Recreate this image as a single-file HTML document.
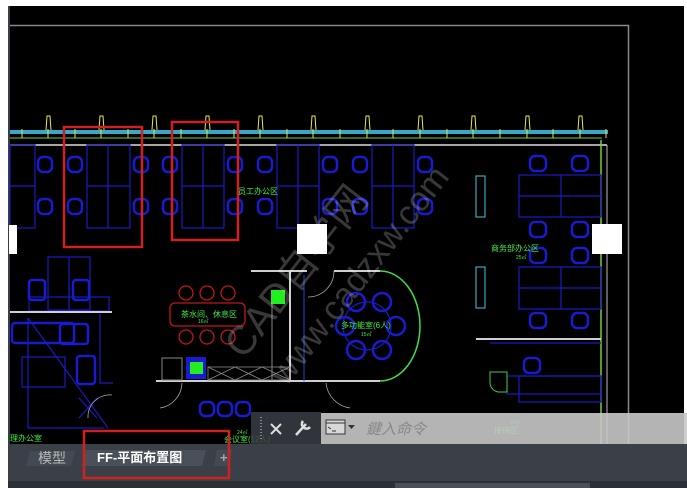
<!DOCTYPE html>
<html><head><meta charset="utf-8"><style>
body{margin:0;width:687px;height:488px;overflow:hidden;background:#fff;font-family:"Liberation Sans","Noto Sans CJK SC",sans-serif}
svg{position:absolute;left:0;top:0}
</style></head><body>
<svg width="687" height="488" viewBox="0 0 687 488" xmlns="http://www.w3.org/2000/svg">
<rect x="8" y="6" width="676" height="440" fill="#000"/>
<rect x="8" y="6" width="2" height="440" fill="#3a3f47"/>
<path d="M10 25.5H628.5V446" stroke="#8a8a8a" stroke-width="1.5" fill="none"/>
<rect x="10" y="130" width="598" height="4" fill="#3aa6c8"/>
<line x1="10" y1="138" x2="602" y2="138" stroke="#6fd040" stroke-width="1"/>
<g stroke="#e8e840" stroke-width="1" fill="none">
<path d="M46 130L47 116H50L51 130M99 130L100 116H103L104 130M152 130L153 116H156L157 130M205 130L206 116H209L210 130M258 130L259 116H262L263 130M311 130L312 116H315L316 130M365 130L366 116H369L370 130M418 130L419 116H422L423 130M471 130L472 116H475L476 130M525 130L526 116H529L530 130M578 130L579 116H582L583 130"/>
<path d="M22 129V138M48 129V138M75 129V138M101 129V138M128 129V138M154 129V138M181 129V138M207 129V138M234 129V138M260 129V138M287 129V138M313 129V138M340 129V138M367 129V138M393 129V138M420 129V138M447 129V138M473 129V138M500 129V138M527 129V138M553 129V138M580 129V138M606 129V138"/>
</g>
<line x1="10" y1="145" x2="607" y2="145" stroke="#ddd" stroke-width="1.5"/>
<line x1="601" y1="140" x2="601" y2="446" stroke="#6fd040" stroke-width="1.5"/>
<line x1="607" y1="145" x2="607" y2="446" stroke="#bbb" stroke-width="1"/>
<g stroke="#1a1ac0" stroke-width="1.2" fill="none">
<rect x="10" y="145" width="25" height="83"/><line x1="10" y1="186" x2="35" y2="186"/>
<rect x="87" y="145" width="43" height="83"/><line x1="108" y1="145" x2="108" y2="228"/><line x1="87" y1="186" x2="130" y2="186"/>
<rect x="182" y="145" width="42" height="83"/><line x1="203" y1="145" x2="203" y2="228"/><line x1="182" y1="186" x2="224" y2="186"/>
<rect x="277" y="145" width="42" height="83"/><line x1="298" y1="145" x2="298" y2="228"/><line x1="277" y1="186" x2="319" y2="186"/>
<rect x="372" y="145" width="42" height="83"/><line x1="393" y1="145" x2="393" y2="228"/><line x1="372" y1="186" x2="414" y2="186"/>
<rect x="519" y="175" width="82" height="42"/><line x1="561" y1="175" x2="561" y2="217"/><line x1="519" y1="196" x2="601" y2="196"/>
<rect x="519" y="267" width="82" height="42"/><line x1="561" y1="267" x2="561" y2="309"/><line x1="519" y1="288" x2="601" y2="288"/>
</g>
<g stroke="#1a1ad0" stroke-width="2.5" fill="none">
<rect x="38" y="157" width="14" height="15" rx="5"/><rect x="38" y="199" width="14" height="15" rx="5"/>
<rect x="68" y="157" width="14" height="15" rx="5"/><rect x="68" y="199" width="14" height="15" rx="5"/>
<rect x="134" y="157" width="14" height="15" rx="5"/><rect x="134" y="199" width="14" height="15" rx="5"/>
<rect x="163" y="157" width="14" height="15" rx="5"/><rect x="163" y="199" width="14" height="15" rx="5"/>
<rect x="228" y="157" width="14" height="15" rx="5"/><rect x="228" y="199" width="14" height="15" rx="5"/>
<rect x="258" y="157" width="14" height="15" rx="5"/><rect x="258" y="199" width="14" height="15" rx="5"/>
<rect x="323" y="157" width="14" height="15" rx="5"/><rect x="323" y="199" width="14" height="15" rx="5"/>
<rect x="353" y="157" width="14" height="15" rx="5"/><rect x="353" y="199" width="14" height="15" rx="5"/>
<rect x="418" y="157" width="14" height="15" rx="5"/><rect x="418" y="199" width="14" height="15" rx="5"/>
<rect x="530" y="156" width="16" height="15" rx="5"/><rect x="572" y="156" width="16" height="15" rx="5"/>
<rect x="530" y="222" width="16" height="15" rx="5"/><rect x="572" y="222" width="16" height="15" rx="5"/>
<rect x="530" y="248" width="16" height="15" rx="5"/><rect x="572" y="248" width="16" height="15" rx="5"/>
<rect x="530" y="313" width="16" height="15" rx="5"/><rect x="572" y="313" width="16" height="15" rx="5"/>
<rect x="524" y="358" width="16" height="15" rx="5"/>
<rect x="29" y="280" width="16" height="20" rx="3"/><rect x="73" y="280" width="16" height="20" rx="3"/>
<rect x="12" y="323" width="62" height="20" rx="3"/><rect x="60" y="324" width="28" height="20" rx="3"/>
<rect x="77" y="356" width="18" height="28" rx="3"/>
<ellipse cx="356" cy="302" rx="9" ry="9"/><ellipse cx="382" cy="302" rx="9" ry="9"/>
<ellipse cx="345" cy="326" rx="9" ry="9"/><ellipse cx="396" cy="326" rx="9" ry="9"/>
<ellipse cx="356" cy="350" rx="9" ry="9"/><ellipse cx="382" cy="350" rx="9" ry="9"/>
<rect x="200" y="402" width="14" height="14" rx="5"/><rect x="218" y="402" width="14" height="14" rx="5"/><rect x="236" y="402" width="14" height="14" rx="5"/>
</g>
<g stroke="#1a1ac0" stroke-width="1.2" fill="none">
<rect x="48" y="257" width="42" height="53"/><line x1="69" y1="257" x2="69" y2="310"/><rect x="29" y="297" width="80" height="14"/>
<rect x="22" y="357" width="43" height="30"/>
<path d="M28 318L108 428M28 318V428H104"/><path d="M79 418L97 398M79 398L97 418"/>
<circle cx="367" cy="326" r="24"/>
<rect x="519" y="376" width="82" height="26"/><rect x="507" y="376" width="94" height="18"/>
<path d="M100 314V383H113"/>
<line x1="490" y1="343" x2="601" y2="343"/>
</g>
<g stroke="#3aa6b8" stroke-width="1.2" fill="none">
<rect x="476" y="176" width="9" height="41"/><rect x="476" y="267" width="9" height="41"/>
</g>
<g stroke="#cfcfcf" stroke-width="2" fill="none">
<line x1="10" y1="312" x2="112" y2="312"/>
<line x1="251" y1="271" x2="307" y2="271"/><line x1="334" y1="271" x2="380" y2="271"/>
<line x1="156" y1="381" x2="380" y2="381"/>
<line x1="290" y1="271" x2="290" y2="381"/>
<line x1="476" y1="339" x2="601" y2="339"/>
</g>
<line x1="272" y1="290" x2="272" y2="381" stroke="#888" stroke-width="1"/>
<line x1="304" y1="275" x2="304" y2="381" stroke="#2244cc" stroke-width="1"/>
<path d="M380 271A40 55 0 0 1 380 381" stroke="#44dd44" stroke-width="1.5" fill="none"/>
<path d="M490 372H507V392H498A10 10 0 0 1 490 382Z" stroke="#44cc44" stroke-width="1" fill="none"/>
<g stroke="#aaa" stroke-width="0.8" fill="none">
<path d="M308 297A26 26 0 0 0 334 271"/><path d="M112 395A22 22 0 0 0 88 418"/>
<path d="M182 383A26 26 0 0 1 160 408"/><path d="M326 383A28 28 0 0 0 350 408"/>
</g>
<g stroke="#c01818" stroke-width="1.3" fill="none">
<circle cx="186" cy="293" r="7"/><circle cx="207" cy="293" r="7"/><circle cx="228" cy="293" r="7"/>
<circle cx="186" cy="337" r="7"/><circle cx="207" cy="337" r="7"/><circle cx="228" cy="337" r="7"/>
<rect x="170" y="303" width="75" height="23" rx="5"/>
</g>
<rect x="162" y="358" width="20" height="22" stroke="#888" fill="none"/>
<rect x="186" y="357" width="20" height="22" fill="#1a1ad0"/>
<rect x="190" y="362" width="13" height="12" fill="#22ee22"/>
<rect x="271" y="290" width="14" height="14" fill="#22ee22"/>
<g stroke="#888" stroke-width="0.8" fill="none"><rect x="208" y="367" width="82" height="13"/><path d="M208 367L235 380M235 367L208 380M235 367L262 380M262 367L235 380M262 367L290 380M290 367L262 380"/></g>
<rect x="64" y="127" width="78" height="120" stroke="#d02020" stroke-width="2.5" fill="none"/>
<rect x="172" y="122" width="66" height="118" stroke="#d02020" stroke-width="2.5" fill="none"/>
<rect x="9" y="225" width="8" height="29" fill="#fff"/>
<rect x="297" y="224" width="30" height="30" fill="#fff"/>
<rect x="592" y="224" width="30" height="30" fill="#fff"/>
<g fill="#44ee44" font-size="8" font-family="Liberation Sans,Noto Sans CJK SC,sans-serif">
<text x="238" y="194">员工办公区</text>
<text x="491" y="251">商务部办公区</text><text x="516" y="259" font-size="5">25㎡</text>
<text x="181" y="317">茶水间、休息区</text><text x="198" y="323" font-size="5">16㎡</text>
<text x="341" y="328">多功能室(6人)</text><text x="361" y="336" font-size="5">15㎡</text>
<text x="10" y="441">理办公室</text>
<text x="224" y="442">会议室(12人)</text><text x="237" y="434" font-size="5">24㎡</text>
<text x="494" y="433">接待区</text><text x="510" y="424" font-size="5">20㎡</text>
</g>
<g fill="#ffffff" fill-opacity="0.22" font-size="40" font-family="Liberation Sans,Noto Sans CJK SC,sans-serif" transform="rotate(-52 330 250)"><text x="190" y="250">CAD自学网</text><text x="195" y="300" font-size="34">www.cadzxw.com</text></g>
<rect x="251" y="412" width="70" height="32" fill="#3a3d44" fill-opacity="0.85"/>
<line x1="261" y1="417" x2="261" y2="440" stroke="#ddd" stroke-dasharray="1 2"/>
<path d="M271 424L281 434M281 424L271 434" stroke="#ddd" stroke-width="2"/>
<path d="M296 435L306 424M303 421A4 4 0 0 0 310 427" stroke="#ddd" stroke-width="2.5" fill="none"/>
<rect x="321" y="413" width="366" height="31" fill="#c8c8c8" fill-opacity="0.9"/>
<rect x="326" y="420" width="19" height="14" fill="#d8d8d8" stroke="#333" stroke-width="1"/>
<line x1="326" y1="423" x2="345" y2="423" stroke="#333"/><path d="M328 427L331 429M332 431H336" stroke="#333"/>
<path d="M348 425H355L351.5 429Z" fill="#333"/>
<text x="366" y="434" font-size="15" fill="#888" font-style="italic" font-family="Liberation Sans,Noto Sans CJK SC,sans-serif">鍵入命令</text>
<rect x="0" y="444" width="687" height="44" fill="#3b4048"/>
<rect x="0" y="444" width="8" height="44" fill="#fff"/>
<rect x="8" y="481" width="679" height="7" fill="#2b2f36"/>
<rect x="395" y="483" width="195" height="5" fill="#4a4f58"/>
<path d="M26 466L30 451H75L71 466Z" fill="#444a53"/>
<text x="38" y="463" font-size="14" fill="#b8b8b8" font-family="Liberation Sans,Noto Sans CJK SC,sans-serif">模型</text>
<path d="M82 466L86 450H206L202 466Z" fill="#4a505a"/>
<text x="97" y="462" font-size="13" font-weight="bold" fill="#fff" font-family="Liberation Sans,Noto Sans CJK SC,sans-serif">FF-平面布置图</text>
<path d="M214 466L217 450H232L229 466Z" fill="#444a53"/>
<text x="220" y="462" font-size="13" fill="#aaa" font-weight="bold">+</text>
<rect x="84" y="431" width="145" height="47" stroke="#d02020" stroke-width="2.5" fill="none"/>
</svg>
</body></html>
